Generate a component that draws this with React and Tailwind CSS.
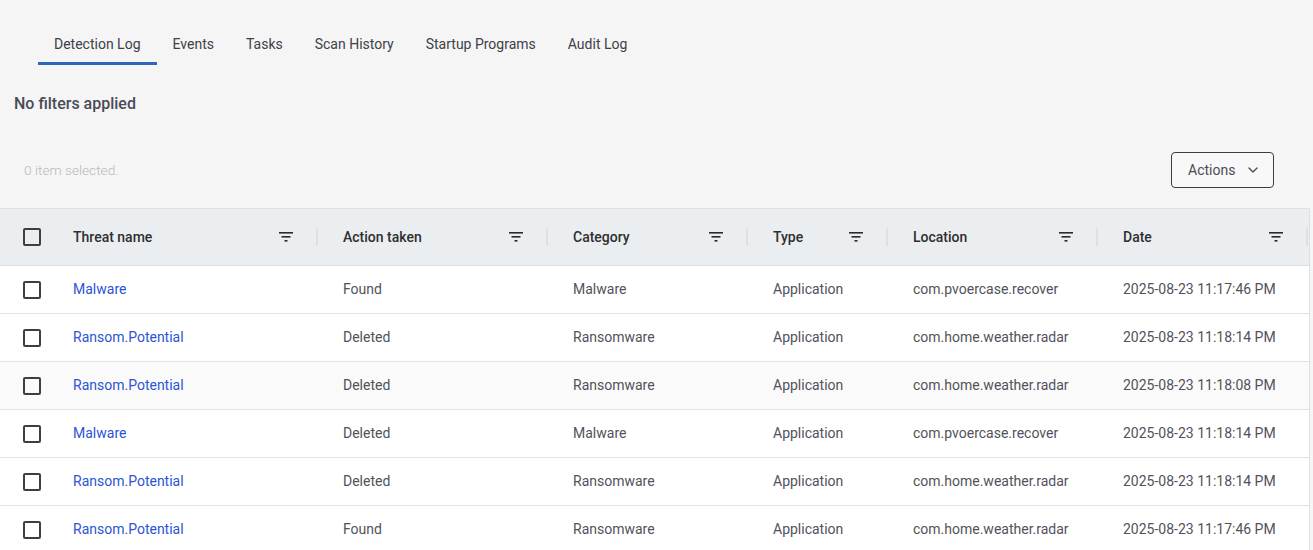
import { ChevronDown } from "lucide-react";

const tabs = ["Detection Log", "Events", "Tasks", "Scan History", "Startup Programs", "Audit Log"];
const columns = ["Threat name", "Action taken", "Category", "Type", "Location", "Date"];
const rows = [
  ["Malware", "Found", "Malware", "Application", "com.pvoercase.recover", "2025-08-23 11:17:46 PM"],
  ["Ransom.Potential", "Deleted", "Ransomware", "Application", "com.home.weather.radar", "2025-08-23 11:18:14 PM"],
  ["Ransom.Potential", "Deleted", "Ransomware", "Application", "com.home.weather.radar", "2025-08-23 11:18:08 PM"],
  ["Malware", "Deleted", "Malware", "Application", "com.pvoercase.recover", "2025-08-23 11:18:14 PM"],
  ["Ransom.Potential", "Deleted", "Ransomware", "Application", "com.home.weather.radar", "2025-08-23 11:18:14 PM"],
  ["Ransom.Potential", "Found", "Ransomware", "Application", "com.home.weather.radar", "2025-08-23 11:17:46 PM"],
];

const gridCols = "grid grid-cols-[48px_270px_230px_200px_140px_210px_210px]";

const Checkbox = () => (
  <div className="ml-[23px] h-[18px] w-[18px] rounded-[2px] border-2 border-[#3f3f3f]"></div>
);

const FilterIcon = () => (
  <svg width="14" height="10" viewBox="0 0 14 10" fill="none">
    <rect x="0" y="0" width="14" height="1.6" fill="#2b2b2b" />
    <rect x="2.5" y="4" width="9" height="1.6" fill="#2b2b2b" />
    <rect x="5.5" y="8" width="3" height="1.6" fill="#2b2b2b" />
  </svg>
);

export default function App() {
  return (
    <div className="h-[550px] w-[1313px] overflow-hidden bg-[#f5f5f5] font-['Roboto',sans-serif]">
      <div className="flex h-[65px] pl-[38px] pt-[24px]">
        {tabs.map((tab, i) => (
          <div
            key={tab}
            className={`h-[41px] px-4 pt-[11px] text-[14px] leading-[18px] text-[#3f4048] ${
              i === 0 ? "border-b-[3px] border-[#2f67b8]" : ""
            }`}
          >
            {tab}
          </div>
        ))}
      </div>
      <p className="mt-[28px] pl-[14px] text-[16px] leading-[22px] font-medium text-[#4a4b57]">No filters applied</p>
      <div className="mt-[37px] flex h-[36px] items-center justify-between pl-[24px] pr-[39px]">
        <span className="text-[13.7px] font-light text-[#b9b9b9]">0 item selected.</span>
        <button className="flex h-[36px] w-[103px] items-center gap-[10px] rounded-[4px] border border-[#3b3c4a] bg-[#f8f8f8] pl-4 text-[14px] text-[#4a4b55]">
          Actions
          <ChevronDown size={16} strokeWidth={2} />
        </button>
      </div>
      <div className="mt-[20px] w-[1310px] border-r border-t border-[#e0e0e0]">
        <div className={`${gridCols} h-[57px] items-center border-b border-[#dedede] bg-[#ebeef1]`}>
          <Checkbox />
          {columns.map((col) => (
            <div key={col} className="flex h-[18px] items-center justify-between border-r-2 border-[#dfe0e1] pl-[25px] pr-[23px]">
              <span className="text-[14px] font-medium text-[#2f2f2f]">{col}</span>
              <FilterIcon />
            </div>
          ))}
        </div>
        {rows.map((row, i) => (
          <div
            key={i}
            className={`${gridCols} h-[48px] items-center border-b border-[#e2e2e2] ${
              i === 2 ? "bg-[#fafafa]" : "bg-white"
            }`}
          >
            <Checkbox />
            {row.map((cell, j) => (
              <div
                key={j}
                className={`pl-[25px] text-[14px] ${j === 0 ? "text-[#2b55d4]" : "text-[#51525c]"}`}
              >
                {cell}
              </div>
            ))}
          </div>
        ))}
      </div>
    </div>
  );
}
